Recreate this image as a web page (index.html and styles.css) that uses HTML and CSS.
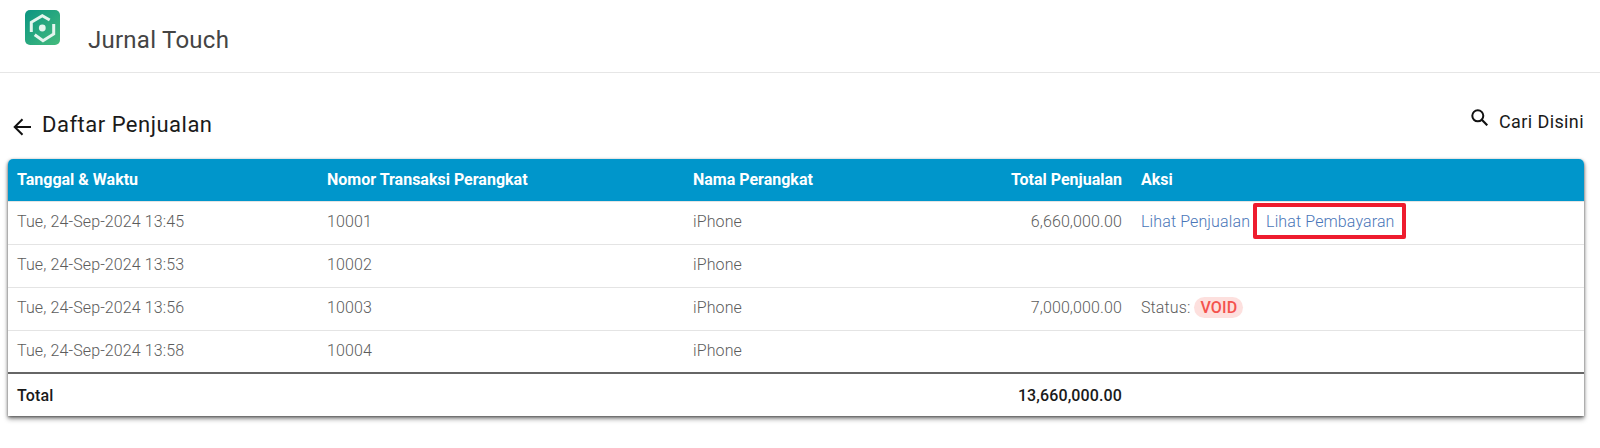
FILE: index.html
```html
<!DOCTYPE html>
<html lang="en">
	<head>
		<meta charset="UTF-8" />
		<title>Jurnal Touch</title>
		<link rel="stylesheet" href="styles.css">
	</head>
	<body>
		<header class="app-header">
			<svg class="app-logo" viewBox="0 0 35 35" width="35" height="35">
				<defs>
					<linearGradient id="logoFill" x1="0" y1="0" x2="1" y2="1">
						<stop offset="0" stop-color="#0b9582" />
						<stop offset="1" stop-color="#45bb7c" />
					</linearGradient>
				</defs>
				<rect width="35" height="35" rx="5" fill="url(#logoFill)" />
				<path d="M6.3 22V12.3L17.3 5.7L24.7 10" fill="none" stroke="#e4f5ee" stroke-width="3" />
				<path d="M28.7 14V24L18 30.7L9.7 24.7" fill="none" stroke="#e4f5ee" stroke-width="3" />
				<circle cx="17.3" cy="18" r="3.4" fill="#e4f5ee" />
			</svg>
			<span class="app-title">Jurnal Touch</span>
		</header>

		<main class="page">
			<div class="page-head">
				<div class="page-title">
					<svg class="back-icon" viewBox="0 0 18 18" width="18" height="18"><path d="M18 9H2M9.5 1.2L1.7 9l7.8 7.8" fill="none" stroke="#111" stroke-width="2" /></svg>
					<h1>Daftar Penjualan</h1>
				</div>
				<div class="search">
					<svg class="search-icon" viewBox="0 0 17 17" width="17" height="17"><circle cx="6.8" cy="6.8" r="5.5" fill="none" stroke="#111" stroke-width="2" /><path d="M10.8 10.8l5.5 5.5" fill="none" stroke="#111" stroke-width="2.2" /></svg>
					<span>Cari Disini</span>
				</div>
			</div>

			<div class="table-card">
				<table class="sales-table">
					<colgroup>
						<col class="col-date" />
						<col class="col-number" />
						<col class="col-device" />
						<col class="col-total" />
						<col />
					</colgroup>
					<thead>
						<tr>
							<th>Tanggal &amp; Waktu</th>
							<th>Nomor Transaksi Perangkat</th>
							<th>Nama Perangkat</th>
							<th class="num">Total Penjualan</th>
							<th>Aksi</th>
						</tr>
					</thead>
					<tbody>
						<tr>
							<td>Tue, 24-Sep-2024 13:45</td>
							<td>10001</td>
							<td>iPhone</td>
							<td class="num">6,660,000.00</td>
							<td>
								<a class="link" href="#">Lihat Penjualan</a>
								<a class="link link-marked" href="#">Lihat Pembayaran</a>
							</td>
						</tr>
						<tr>
							<td>Tue, 24-Sep-2024 13:53</td>
							<td>10002</td>
							<td>iPhone</td>
							<td class="num"></td>
							<td></td>
						</tr>
						<tr>
							<td>Tue, 24-Sep-2024 13:56</td>
							<td>10003</td>
							<td>iPhone</td>
							<td class="num">7,000,000.00</td>
							<td>Status: <span class="badge-void">VOID</span></td>
						</tr>
						<tr>
							<td>Tue, 24-Sep-2024 13:58</td>
							<td>10004</td>
							<td>iPhone</td>
							<td class="num"></td>
							<td></td>
						</tr>
					</tbody>
					<tfoot>
						<tr>
							<td>Total</td>
							<td></td>
							<td></td>
							<td class="num">13,660,000.00</td>
							<td></td>
						</tr>
					</tfoot>
				</table>
			</div>
		</main>
	</body>
</html>
```

FILE: styles.css
```css
:root {
	--header-blue: #0096cb;
	--link: #4a76b8;
	--muted: #5c5c5c;
	--line: #e4e4e4;
}

body {
	margin: 0;
	padding: 0;
	font-family: 'Roboto', sans-serif;
	background: white;
}

.app-header {
	display: flex;
	align-items: flex-start;
	gap: 28px;
	height: 73px;
	padding: 10px 0 0 25px;
	box-sizing: border-box;
	border-bottom: 1px solid #e6e6e6;
}

.app-title {
	margin-top: 16px;
	font-size: 24px;
	line-height: 28px;
	letter-spacing: 0.25px;
	color: #444;
}

.page {
	padding: 0 16px 20px 8px;
}

.page-head {
	display: flex;
	justify-content: space-between;
	align-items: flex-start;
	height: 86px;
	padding-top: 37px;
	box-sizing: border-box;
}

.page-title {
	display: flex;
	align-items: flex-start;
	gap: 11px;
	padding: 1px 0 0 5px;
}

.page-title h1 {
	margin: 0;
	font-size: 22px;
	font-weight: 400;
	line-height: 28px;
	letter-spacing: 0.5px;
	color: #1a1a1a;
}

.back-icon {
	margin-top: 7px;
}

.search {
	display: flex;
	align-items: flex-start;
	gap: 11px;
	font-size: 18px;
	line-height: 24px;
	letter-spacing: 0.4px;
	color: #1a1a1a;
}

.search-icon {
	margin-top: -1px;
}

.table-card {
	border-radius: 5px 5px 0 0;
	overflow: hidden;
	box-shadow: 0 1px 3px rgba(0, 0, 0, 0.5), 0 3px 5px rgba(0, 0, 0, 0.4);
}

.sales-table {
	width: 100%;
	border-collapse: separate;
	border-spacing: 0;
	table-layout: fixed;
	font-size: 16px;
	font-weight: 300;
	letter-spacing: 0.12px;
	color: var(--muted);
}

.col-date {
	width: 310px;
}

.col-number {
	width: 366px;
}

.col-device {
	width: 299px;
}

.col-total {
	width: 149px;
}

.sales-table th,
.sales-table td {
	box-sizing: border-box;
	padding: 0 9px;
	text-align: left;
	white-space: nowrap;
}

.sales-table th {
	height: 43px;
	padding-bottom: 2px;
	background: var(--header-blue);
	border-bottom: 1px solid var(--line);
	color: white;
	font-weight: 700;
	letter-spacing: 0;
}

.sales-table tbody td {
	height: 43px;
	padding-bottom: 3px;
	border-bottom: 1px solid var(--line);
}

.sales-table tbody tr:last-child td {
	border-bottom: 2px solid #666;
}

.sales-table tfoot td {
	height: 42px;
	font-weight: 500;
	color: #1a1a1a;
}

.sales-table .num {
	padding-right: 10px;
	text-align: right;
}

.link {
	color: var(--link);
	text-decoration: none;
}

.link-marked {
	position: relative;
	margin-left: 12px;
}

/* red annotation box drawn over the row */
.link-marked::after {
	content: '';
	position: absolute;
	top: -9px;
	right: -11px;
	bottom: -8px;
	left: -13px;
	border: 4px solid #ee1c2e;
	border-radius: 2px;
}

.badge-void {
	display: inline-block;
	padding: 0 6px;
	border-radius: 11px;
	background: #fde0de;
	color: #f4524d;
	font-weight: 500;
	line-height: 21px;
}
```
